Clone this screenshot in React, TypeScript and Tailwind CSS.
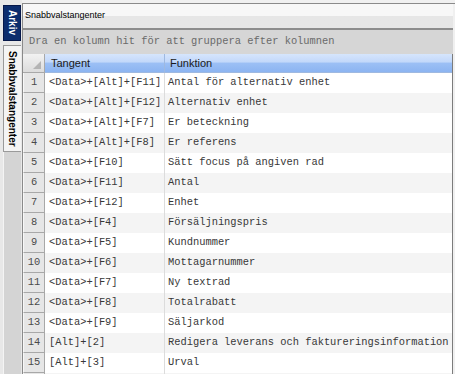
const rows = [
  ['<Data>+[Alt]+[F11]', 'Antal för alternativ enhet'],
  ['<Data>+[Alt]+[F12]', 'Alternativ enhet'],
  ['<Data>+[Alt]+[F7]', 'Er beteckning'],
  ['<Data>+[Alt]+[F8]', 'Er referens'],
  ['<Data>+[F10]', 'Sätt focus på angiven rad'],
  ['<Data>+[F11]', 'Antal'],
  ['<Data>+[F12]', 'Enhet'],
  ['<Data>+[F4]', 'Försäljningspris'],
  ['<Data>+[F5]', 'Kundnummer'],
  ['<Data>+[F6]', 'Mottagarnummer'],
  ['<Data>+[F7]', 'Ny textrad'],
  ['<Data>+[F8]', 'Totalrabatt'],
  ['<Data>+[F9]', 'Säljarkod'],
  ['[Alt]+[2]', 'Redigera leverans och faktureringsinformation'],
  ['[Alt]+[3]', 'Urval'],
  ['', ''],
];

const mono = "font-['Liberation_Mono','Courier_New',monospace] text-[10.4px]";
const headBg = 'bg-[linear-gradient(to_bottom,#d6e5fc_0%,#c2d8fa_45%,#9cc0f5_50%,#8cb4f1_100%)]';

export default function App() {
  return (
    <div className="w-[455px] h-[374px] flex overflow-hidden bg-[#f0f0f0] font-['Liberation_Sans',Arial,sans-serif]">
      {/* side tabs */}
      <div className="w-[22px] shrink-0 flex flex-col pt-[5px] pl-[3px] pr-[1px] bg-[#e8e8e8]">
        <div className="h-[36px] flex items-center justify-center bg-[#0c2d6e] border border-[#06184a] text-white text-[10px] font-bold [writing-mode:vertical-rl]">
          Arkiv
        </div>
        <div className="mt-[4px] h-[107px] flex items-center justify-center bg-[#f4f4f4] border border-[#9a9a9a] border-r-0 text-black text-[10px] font-bold [writing-mode:vertical-rl]">
          Snabbvalstangenter
        </div>
        <div className="flex-1 bg-[#d4d4d4] border-l border-[#f4f4f4]" />
      </div>

      {/* main panel */}
      <div className="flex-1 flex flex-col mt-[3px] border-t border-l border-[#8a8a8a] pr-[2px]">
        <div className="h-[24px] shrink-0 flex items-center pl-[2px] text-[9px] text-black bg-gradient-to-b from-[#f7f7f7] from-50% to-[#e6e6e6] to-50%">
          Snabbvalstangenter
        </div>
        <div className={`h-[26px] shrink-0 flex items-center pl-[6px] bg-[#d6d6d6] border-t-2 border-[#8c8c8c] text-[#6a6a6a] ${mono}`}>
          Dra en kolumn hit för att gruppera efter kolumnen
        </div>
        <div className="flex-1 flex flex-col border-r border-[#7c7c7c] bg-white">
          <div className="h-[19px] shrink-0 flex text-[11px] text-[#1a1a1a]">
            <div className="w-[22px] shrink-0 relative bg-gradient-to-b from-[#f2f2f2] to-[#dcdcdc] border-r border-b border-[#a8a8a8]">
              <div className="absolute right-[3px] bottom-[3px] w-0 h-0 border-l-[8px] border-l-transparent border-b-[8px] border-b-[#b4b4b4]" />
            </div>
            <div className={`w-[120px] shrink-0 flex items-center pl-[6px] ${headBg} border-r border-b border-[#9fb9e0]`}>
              Tangent
            </div>
            <div className={`flex-1 flex items-center pl-[5px] ${headBg} border-b border-[#9fb9e0]`}>
              Funktion
            </div>
          </div>
          {rows.map(([key, fn], i) => (
            <div key={i} className={`h-[20px] shrink-0 flex ${mono} text-[#383838] ${i % 2 ? 'bg-[#f4f4f4]' : 'bg-white'}`}>
              <div className="w-[22px] shrink-0 flex items-center justify-center bg-[#e6e6e6] border-l border-l-[#f8f8f8] border-r border-b border-[#a8a8a8] text-[#4a4a4a]">
                {key ? i + 1 : ''}
              </div>
              <div className="w-[120px] shrink-0 flex items-center pl-[4px] border-r border-[#dcdcdc] whitespace-nowrap">
                {key}
              </div>
              <div className="flex-1 flex items-center pl-[3px] whitespace-nowrap overflow-hidden">{fn}</div>
            </div>
          ))}
        </div>
      </div>
    </div>
  );
}
